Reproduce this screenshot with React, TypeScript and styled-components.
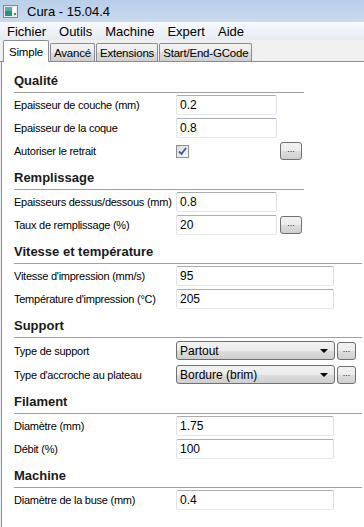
import React from 'react'
import styled, { createGlobalStyle } from 'styled-components'

const GlobalStyle = createGlobalStyle`
  html, body {
    margin: 0;
    padding: 0;
    background: #fff;
  }
  body {
    font-family: "Liberation Sans", Arial, sans-serif;
    font-size: 11px;
    color: #000;
  }
`

const Window = styled.div`
  width: 364px;
  height: 527px;
  display: flex;
  flex-direction: column;
  overflow: hidden;
  background: #f0f0f0;
`

const TitleBar = styled.div`
  height: 22px;
  flex: none;
  display: flex;
  align-items: center;
  gap: 9px;
  padding-left: 3px;
  background: linear-gradient(#b9cee8, #c8daef);
  font-size: 13px;
  color: #000;
`

const MenuBar = styled.div`
  height: 18px;
  flex: none;
  display: flex;
  align-items: center;
  gap: 13px;
  padding-left: 7px;
  background: linear-gradient(#f7f9fc, #e5ebf4);
  font-size: 13px;
`

const TabStrip = styled.div`
  height: 21px;
  flex: none;
  display: flex;
  align-items: flex-end;
  gap: 1px;
  padding: 0 0 0 3px;
  border-bottom: 1px solid #898c95;
  background: #f0f0f0;
`

const Tab = styled.div<{ $active?: boolean }>`
  box-sizing: border-box;
  display: flex;
  align-items: center;
  padding: 0 ${p => (p.$active ? '5px' : '3px')};
  height: ${p => (p.$active ? '22px' : '18px')};
  margin-bottom: ${p => (p.$active ? '-1px' : '0')};
  border: 1px solid #898c95;
  border-bottom: none;
  border-radius: 2px 2px 0 0;
  background: ${p =>
    p.$active
      ? '#fff'
      : 'linear-gradient(#f2f2f2, #ebebeb 50%, #dddddd 50%, #cfcfcf)'};
  font-size: 11.5px;
  letter-spacing: -0.2px;
`

const Panel = styled.div`
  flex: 1;
  background: #fff;
  border-left: 1px solid #898c95;
  margin-left: 1px;
  padding: 2px 0 0 12px;
`

const Heading = styled.h3<{ $wide?: boolean }>`
  margin: 9px 0 0;
  width: ${p => (p.$wide ? '348px' : '290px')};
  height: 16px;
  line-height: 16px;
  padding-bottom: 3px;
  border-bottom: 1px solid #a0a0a0;
  font-size: 13px;
  font-weight: bold;
  color: #1a1a1a;
`

const Rows = styled.div`
  display: flex;
  flex-direction: column;
  gap: 3px;
  padding-top: 2px;
`

const Row = styled.div<{ $tall?: boolean }>`
  display: flex;
  align-items: center;
  height: ${p => (p.$tall ? '21px' : '20px')};
`

const Label = styled.span`
  width: 162px;
  flex: none;
  font-size: 11px;
  letter-spacing: -0.25px;
  white-space: nowrap;
`

const TextField = styled.input<{ $wide?: boolean }>`
  box-sizing: border-box;
  width: ${p => (p.$wide ? '158px' : '101px')};
  height: 20px;
  margin: 0;
  padding: 0 3px;
  border: 1px solid;
  border-color: #abadb3 #dbdfe6 #e3e9ef #e2e3ea;
  border-radius: 2px;
  background: #fff;
  font-family: "Liberation Sans", Arial, sans-serif;
  font-size: 12px;
  color: #000;
  outline: none;
`

const CheckCell = styled.div`
  width: 101px;
  flex: none;
  display: flex;
  align-items: center;
`

const Check = styled.span`
  box-sizing: border-box;
  width: 13px;
  height: 13px;
  border: 1px solid #8e8f8f;
  background: linear-gradient(135deg, #dcdcdc, #fbfbfb);
  display: flex;
  align-items: center;
  justify-content: center;
`

const DotsButton = styled.button<{ $small?: boolean }>`
  box-sizing: border-box;
  width: ${p => (p.$small ? '19px' : '22px')};
  height: 18px;
  margin: 0 0 0 ${p => (p.$small ? '2px' : '3px')};
  padding: 0 0 3px;
  border: 1px solid #707070;
  border-radius: 3px;
  background: linear-gradient(#f2f2f2, #ebebeb 50%, #dddddd 50%, #cfcfcf);
  font-family: "Liberation Sans", Arial, sans-serif;
  font-size: 9px;
  line-height: 1;
  color: #222;
`

const Select = styled.div`
  box-sizing: border-box;
  width: 159px;
  height: 19px;
  display: flex;
  align-items: center;
  justify-content: space-between;
  padding: 0 6px 0 3px;
  border: 1px solid #707070;
  border-radius: 3px;
  background: linear-gradient(#f2f2f2, #ebebeb 50%, #dddddd 50%, #cfcfcf);
  font-size: 12px;
`

const Arrow = styled.span`
  width: 0;
  height: 0;
  border-left: 4px solid transparent;
  border-right: 4px solid transparent;
  border-top: 4px solid #000;
`

function AppIcon () {
  return (
    <svg width="15" height="13" viewBox="0 0 15 13">
      <rect x="0.5" y="0.5" width="14" height="12" fill="#e8ecef" stroke="#7d8a93" />
      <rect x="2" y="2" width="7" height="9" fill="#2f8f7d" />
      <rect x="2" y="2" width="7" height="4" fill="#55b39e" />
      <rect x="10" y="2" width="3" height="5" fill="#fff" />
      <rect x="11" y="8" width="2" height="2" fill="#3aa14a" />
    </svg>
  )
}

function CheckMark () {
  return (
    <svg width="9" height="9" viewBox="0 0 9 9">
      <path d="M1 4.5 L3.5 7 L8 1" fill="none" stroke="#3a56a8" strokeWidth="1.8" />
    </svg>
  )
}

interface FieldProps {
  label: string
  value: string
  wide?: boolean
  more?: boolean
}

function Field ({ label, value, wide, more }: FieldProps) {
  return (
    <Row>
      <Label>{label}</Label>
      <TextField $wide={wide} defaultValue={value} readOnly />
      {more && <DotsButton type="button">...</DotsButton>}
    </Row>
  )
}

function ChoiceField ({ label, value }: { label: string, value: string }) {
  return (
    <Row $tall>
      <Label>{label}</Label>
      <Select>
        <span>{value}</span>
        <Arrow />
      </Select>
      <DotsButton $small type="button">...</DotsButton>
    </Row>
  )
}

const MENUS = ['Fichier', 'Outils', 'Machine', 'Expert', 'Aide']
const TABS = ['Simple', 'Avancé', 'Extensions', 'Start/End-GCode']

export default function App () {
  return (
    <Window>
      <GlobalStyle />
      <TitleBar>
        <AppIcon />
        <span>Cura - 15.04.4</span>
      </TitleBar>
      <MenuBar>
        {MENUS.map(m => <span key={m}>{m}</span>)}
      </MenuBar>
      <TabStrip>
        {TABS.map((t, i) => <Tab key={t} $active={i === 0}>{t}</Tab>)}
      </TabStrip>
      <Panel>
        <Heading>Qualité</Heading>
        <Rows>
          <Field label="Epaisseur de couche (mm)" value="0.2" />
          <Field label="Epaisseur de la coque" value="0.8" />
          <Row>
            <Label>Autoriser le retrait</Label>
            <CheckCell>
              <Check><CheckMark /></Check>
            </CheckCell>
            <DotsButton type="button">...</DotsButton>
          </Row>
        </Rows>

        <Heading>Remplissage</Heading>
        <Rows>
          <Field label="Epaisseurs dessus/dessous (mm)" value="0.8" />
          <Field label="Taux de remplissage (%)" value="20" more />
        </Rows>

        <Heading $wide>Vitesse et température</Heading>
        <Rows>
          <Field label="Vitesse d'impression (mm/s)" value="95" wide />
          <Field label="Température d'impression (°C)" value="205" wide />
        </Rows>

        <Heading $wide>Support</Heading>
        <Rows>
          <ChoiceField label="Type de support" value="Partout" />
          <ChoiceField label="Type d'accroche au plateau" value="Bordure (brim)" />
        </Rows>

        <Heading $wide>Filament</Heading>
        <Rows>
          <Field label="Diamètre (mm)" value="1.75" wide />
          <Field label="Débit (%)" value="100" wide />
        </Rows>

        <Heading $wide>Machine</Heading>
        <Rows>
          <Field label="Diamètre de la buse (mm)" value="0.4" wide />
        </Rows>
      </Panel>
    </Window>
  )
}
